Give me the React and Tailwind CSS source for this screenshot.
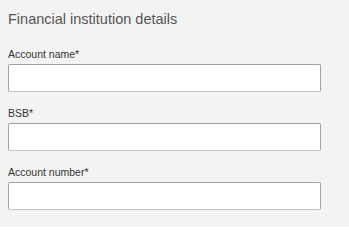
import React from 'react'

function Field({ label }) {
    return (
        <div className="flex flex-col">
            <label className="text-[10.5px] leading-[14px] text-[#333333] mb-[3px]">{label}</label>
            <input
                type="text"
                className="h-[28px] w-full bg-white border border-[#a3a3a3] border-b-[#c4c4c4] rounded-[2px] px-2 outline-none"
            />
        </div>
    )
}

export default function App() {
    return (
        <div className="w-[349px] h-[232px] bg-white" style={{ fontFamily: '"Liberation Sans", Arial, sans-serif' }}>
            <div className="bg-[#f3f3f3] pt-[9px] pb-[17px] pl-[8px] pr-[28px]">
                <h2 className="text-[14.5px] leading-[20px] text-[#555555] mb-[18px]">Financial institution details</h2>
                <div className="flex flex-col gap-[14px]">
                    <Field label="Account name*" />
                    <Field label="BSB*" />
                    <Field label="Account number*" />
                </div>
            </div>
        </div>
    )
}
